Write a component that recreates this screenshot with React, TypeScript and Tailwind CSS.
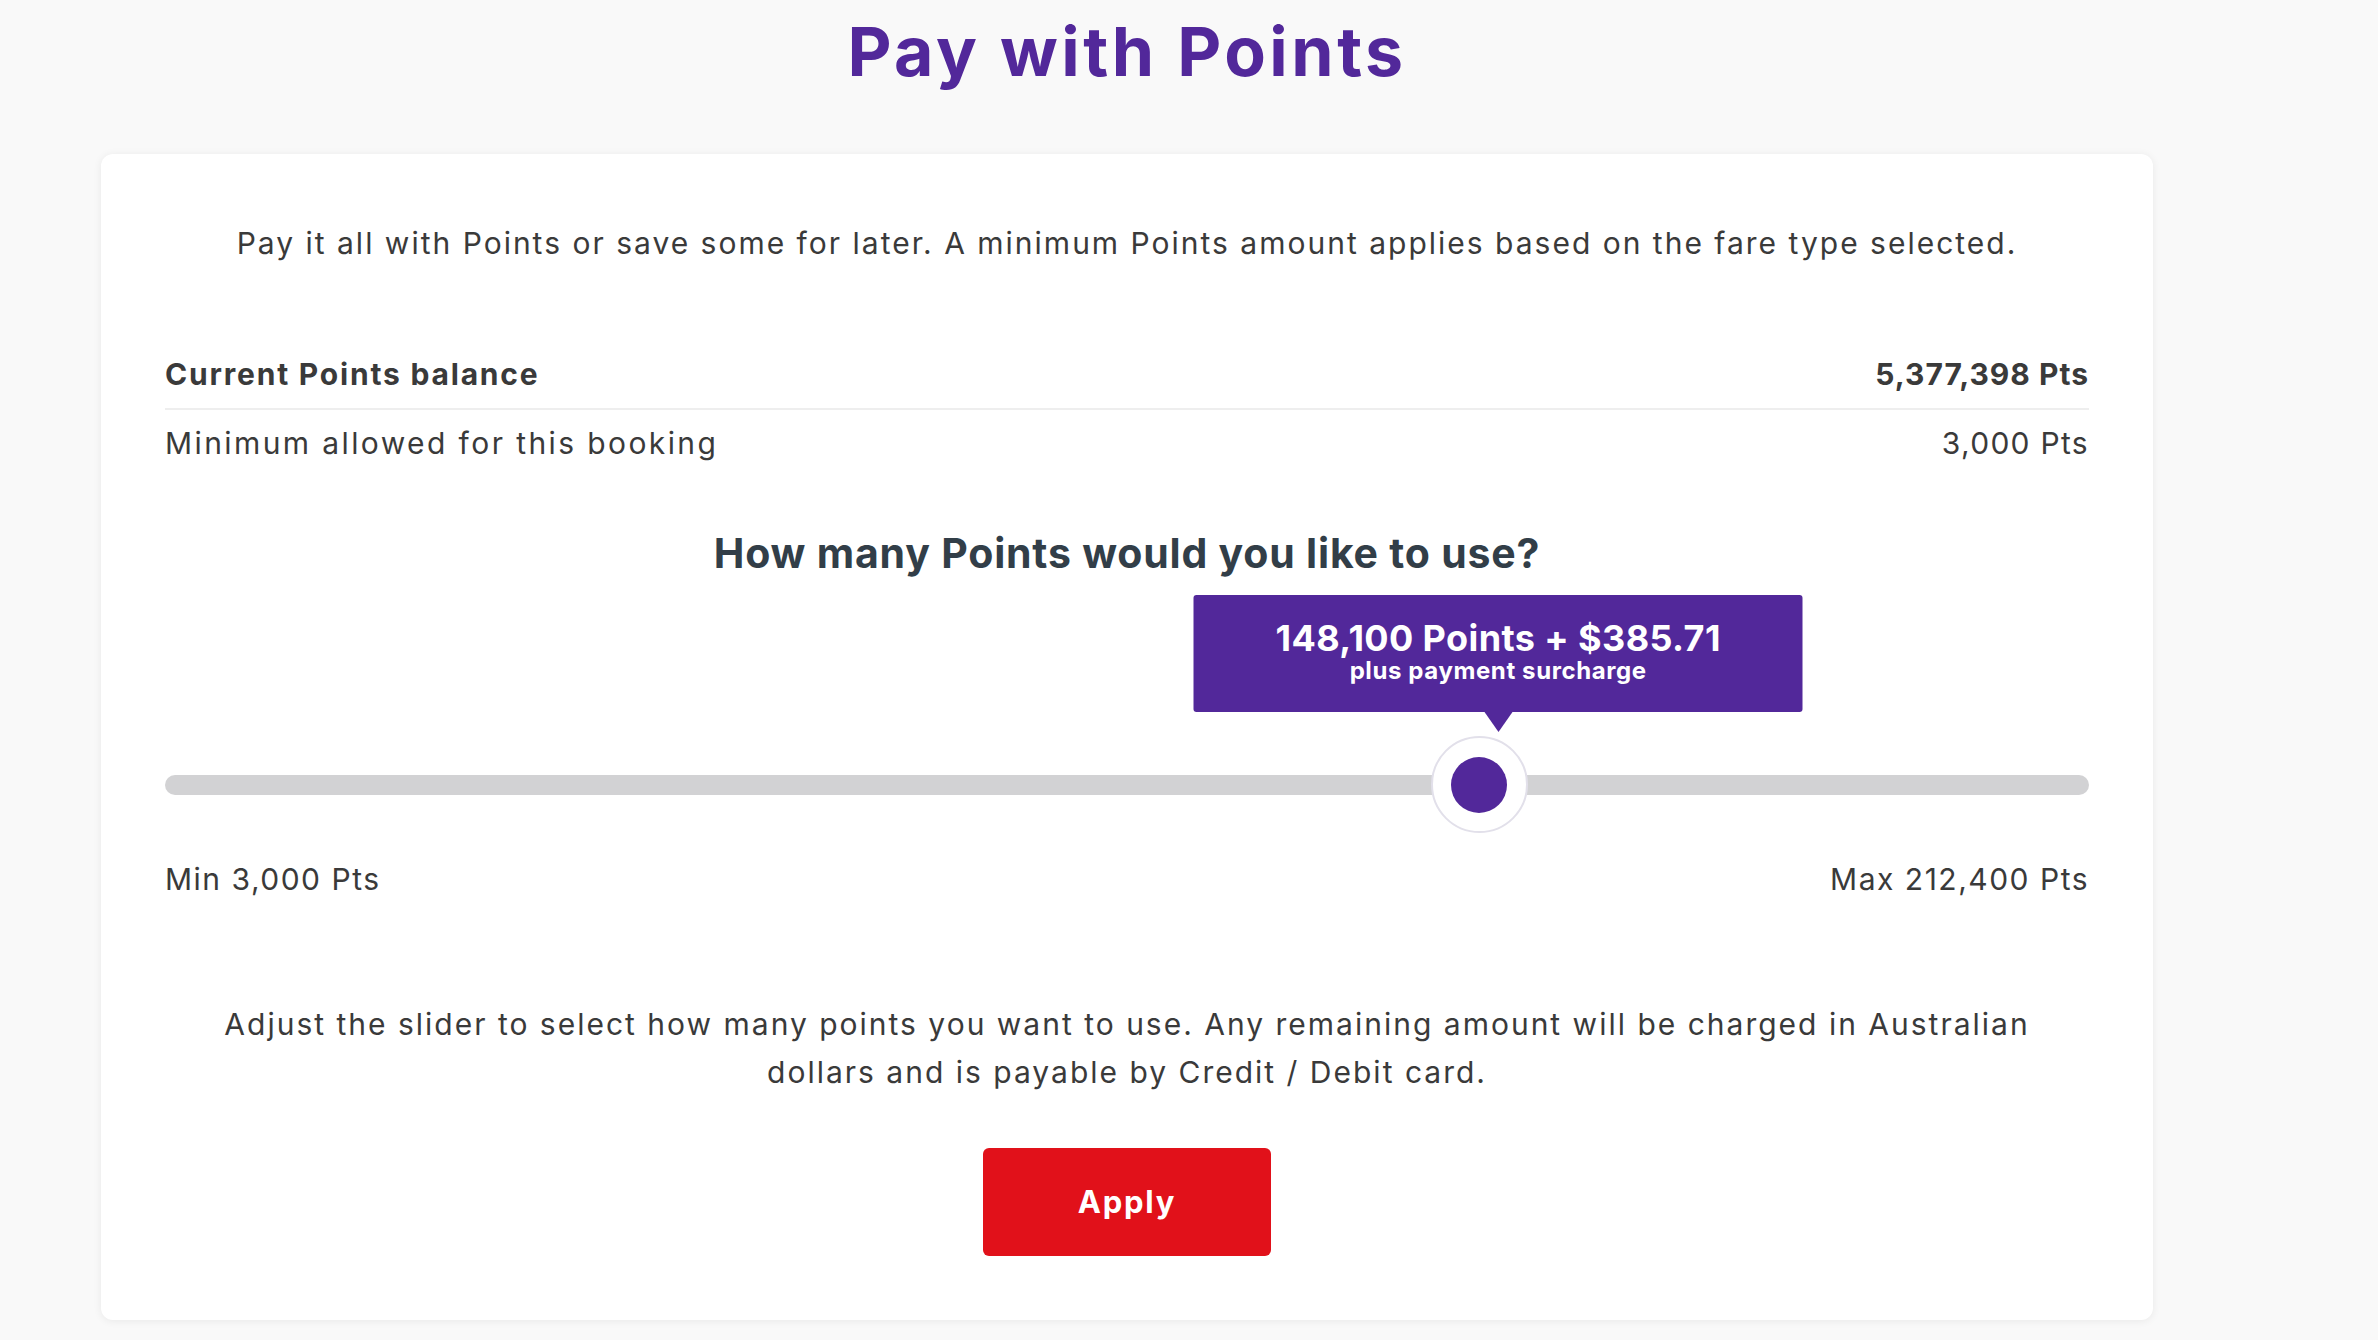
import React from "react";

const MIN_PTS = 3000;
const MAX_PTS = 212400;
const SELECTED_PTS = 148100;
const THUMB = 97;

function fmt(n: number) {
  return n.toLocaleString("en-AU");
}

function PointsSlider() {
  const pct = (SELECTED_PTS - MIN_PTS) / (MAX_PTS - MIN_PTS);

  return (
    <div className="pt-[141px]">
      <div className="relative h-[97px] flex items-center">
        <div className="w-full h-[20px] rounded-full bg-[#d2d2d4]" />

        {/* tooltip */}
        <div
          className="absolute bottom-[101px] -translate-x-1/2 flex flex-col items-center"
          style={{ left: `${pct * 100}%` }}
        >
          <div className="w-[609px] h-[117px] rounded-[3px] bg-[#52289a] text-white text-center pt-[24px]">
            <div className="text-[36px] leading-[38px] font-bold tracking-[0.4px]">
              {fmt(SELECTED_PTS)} Points + $385.71
            </div>
            <div className="text-[24px] leading-[28px] font-bold tracking-[0.6px]">
              plus payment surcharge
            </div>
          </div>
          <div className="w-0 h-0 border-l-[14px] border-r-[14px] border-t-[20px] border-l-transparent border-r-transparent border-t-[#52289a]" />
        </div>

        {/* thumb */}
        <div
          className="absolute top-0 w-[97px] h-[97px] rounded-full bg-white border-2 border-[#e2e0ea] flex items-center justify-center"
          style={{ left: `calc((100% - ${THUMB}px) * ${pct})` }}
        >
          <div className="w-[56px] h-[56px] rounded-full bg-[#52289a]" />
        </div>
      </div>

      <div className="mt-[26px] flex justify-between text-[30px] leading-[40px] tracking-[1.5px] text-[#3a3a3a]">
        <span>Min {fmt(MIN_PTS)} Pts</span>
        <span>Max {fmt(MAX_PTS)} Pts</span>
      </div>
    </div>
  );
}

export default function App() {
  return (
    <div
      className="min-h-screen bg-[#f9f9f9] text-[#3a3a3a]"
      style={{ fontFamily: "Inter, 'Noto Sans', sans-serif" }}
    >
      <div className="ml-[101px] w-[2052px]">
        <h1 className="h-[154px] pt-[1px] text-center text-[68px] leading-[100px] font-bold tracking-[3.5px] text-[#52289a]">
          Pay with Points
        </h1>

        <div className="bg-white rounded-[12px] shadow-[0_1px_8px_rgba(0,0,0,0.07)] px-[64px] pt-[69px] pb-[64px]">
          <p className="text-center text-[30px] leading-[40px] tracking-[2px]">
            Pay it all with Points or save some for later. A minimum Points amount applies based on the fare type selected.
          </p>

          {/* balance rows */}
          <div className="mt-[77px]">
            <div className="flex justify-between items-center py-[14px] border-b-2 border-[#eeeeee] text-[30px] leading-[40px] font-bold">
              <span className="tracking-[1.8px]">Current Points balance</span>
              <span className="tracking-[1px]">5,377,398 Pts</span>
            </div>
            <div className="flex justify-between items-center pt-[13px] text-[30px] leading-[40px]">
              <span className="tracking-[2.4px]">Minimum allowed for this booking</span>
              <span className="tracking-[1.3px]">{fmt(MIN_PTS)} Pts</span>
            </div>
          </div>

          <h2 className="mt-[65px] text-center text-[41px] leading-[50px] font-bold tracking-[0.8px] text-[#323e48]">
            How many Points would you like to use?
          </h2>

          <div className="mt-[17px]">
            <PointsSlider />
          </div>

          <p className="mt-[101px] text-center text-[30px] leading-[48px] tracking-[2px]">
            Adjust the slider to select how many points you want to use. Any remaining amount will be charged in Australian
            <br />
            dollars and is payable by Credit / Debit card.
          </p>

          <div className="mt-[52px] flex justify-center">
            <button className="w-[288px] h-[108px] rounded-[6px] bg-[#e1111a] text-white text-[31px] font-bold tracking-[1.8px]">
              Apply
            </button>
          </div>
        </div>
      </div>
    </div>
  );
}
